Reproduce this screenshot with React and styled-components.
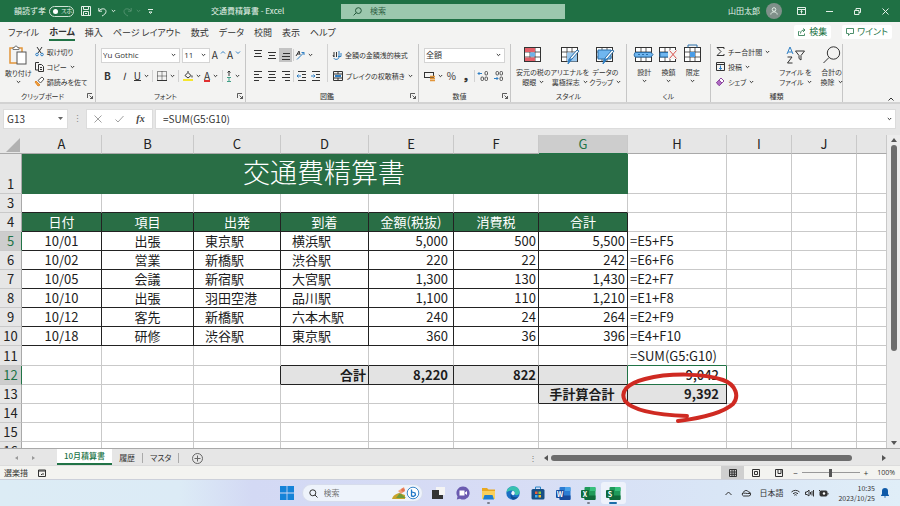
import React, { useState } from "react";
import styled, { createGlobalStyle, css } from "styled-components";

const colours = {
  title: "#1f7044",
  sheet: "#296e45",
  ribbon: "#f3f3f2",
  chrome: "#e6e6e6",
  grid: "#c9c9c9",
  ink: "#333",
  black: "#222",
  accent: "#217346",
  blue: "#2f7fc4",
};

const GlobalStyle = createGlobalStyle`
  * {
    box-sizing: border-box;
  }
  body {
    margin: 0;
    font-family: "Noto Sans CJK JP", sans-serif;
    font-size: 8px;
    line-height: 10px;
    color: ${colours.ink};
    overflow: hidden;
  }
  button, input, select {
    font: inherit;
    color: inherit;
    border: 0;
    padding: 0;
    margin: 0;
    background: none;
    border-radius: 0;
    outline: none;
  }
  button {
    font-feature-settings: "palt";
    white-space: nowrap;
  }
`;

const Page = styled.div`
  display: flex;
  flex-direction: column;
  height: 100vh;
`;

const Svg = styled.svg`
  display: block;
  flex: none;
  fill: none;
  stroke: currentColor;
  stroke-width: 1;
  overflow: visible;
`;

const Icon = ({ w = 12, h = w, children, ...rest }) => (
  <Svg width={w} height={h} viewBox={`0 0 ${w} ${h}`} aria-hidden="true" {...rest}>
    {children}
  </Svg>
);

const Chevron = () => (
  <Icon w={5} h={4}>
    <path d="M.8 1 2.5 2.7 4.2 1" />
  </Icon>
);

/* Title bar */

const TitleBar = styled.header`
  display: grid;
  grid-template-columns: 211fr 130fr 224fr 335fr;
  align-items: center;
  height: 22px;
  background: ${colours.title};
  color: #e4f0e8;
`;

const QuickAccess = styled.div`
  display: flex;
  align-items: center;
  gap: 7px;
  padding-left: 14px;
`;

const Toggle = styled.button`
  display: flex;
  align-items: center;
  gap: 3px;
  width: 25px;
  height: 11px;
  margin-left: -4px;
  padding: 0 3px;
  border: 1px solid #cfe3d6;
  border-radius: 6px;
  font-size: 6px;
  line-height: 8px;
  &::before {
    content: "";
    flex: none;
    width: 5px;
    height: 5px;
    border-radius: 50%;
    background: #fff;
  }
`;

const QuickButton = styled.button`
  display: flex;
  align-items: center;
  gap: 4px;
  opacity: ${(props) => (props.$faded ? 0.25 : 1)};
`;

const DocName = styled.div`
  white-space: nowrap;
`;

const TitleSearch = styled.label`
  display: flex;
  align-items: center;
  gap: 8px;
  height: 15px;
  padding-left: 12px;
  background: #9cc8ae;
  color: #23583a;
  input {
    flex: 1;
    min-width: 0;
    &::placeholder {
      color: #2f5f43;
    }
  }
`;

const WindowControls = styled.div`
  display: flex;
  align-items: center;
  justify-content: flex-end;
  padding-right: 1px;
`;

const Avatar = styled.span`
  display: flex;
  align-items: center;
  justify-content: center;
  width: 16px;
  height: 16px;
  margin: 0 5px 0 6px;
  border-radius: 50%;
  background: #80908a;
`;

const WindowButton = styled.button`
  display: flex;
  align-items: center;
  justify-content: center;
  width: 28px;
  height: 22px;
`;

/* Ribbon tabs */

const TabBar = styled.nav`
  display: flex;
  align-items: center;
  justify-content: space-between;
  height: 20px;
  padding: 0 8px;
  background: ${colours.ribbon};
`;

const Tabs = styled.div`
  display: flex;
  gap: 10px;
`;

const Tab = styled.button`
  height: 17px;
  padding-top: 1px;
  font-size: 9px;
  line-height: 14px;
  ${(props) =>
    props.$active &&
    css`
      font-weight: 700;
      border-bottom: 2px solid ${colours.accent};
    `}
`;

const TabActions = styled.div`
  display: flex;
  gap: 11px;
`;

const ActionButton = styled.button`
  display: flex;
  align-items: center;
  gap: 3px;
  height: 14px;
  padding: 0 4px;
  background: #fff;
  border-radius: 2px;
  color: ${colours.accent};
  font-size: 9px;
`;

/* Ribbon */

const Ribbon = styled.div`
  display: grid;
  grid-template-columns: 96fr 150fr 173fr 92fr 116fr 84fr 132fr 57fr;
  height: 62px;
  padding-top: 2px;
  background: ${colours.ribbon};
  border-bottom: 2px solid #d2d2d2;
`;

const GroupBox = styled.section`
  display: flex;
  flex-direction: column;
  min-width: 0;
  border-right: 1px solid #c6c6c6;
`;

const GroupBody = styled.div`
  display: flex;
  flex: 1;
  gap: ${(props) => props.$gap || 0}px;
  padding: 0 5px;
  justify-content: ${(props) => props.$justify || "flex-start"};
`;

const GroupFooter = styled.div`
  position: relative;
  height: 11px;
  padding-right: ${(props) => (props.$launcher ? 10 : 0)}px;
  text-align: center;
  font-size: 7px;
  line-height: 10px;
  font-feature-settings: "palt";
`;

const Launcher = styled.button`
  position: absolute;
  right: 2px;
  top: 2px;
`;

const Group = ({ label, launcher, children, ...rest }) => (
  <GroupBox aria-label={label}>
    <GroupBody {...rest}>{children}</GroupBody>
    <GroupFooter $launcher={launcher}>
      {label}
      {launcher && (
        <Launcher aria-label={`${label} の設定`}>
          <Icon w={6}>
            <path d="M.5 5V.5H5M2.5 2.5l3 3M5.5 3v2.5H3" strokeWidth=".8" />
          </Icon>
        </Launcher>
      )}
    </GroupFooter>
  </GroupBox>
);

const BigButton = styled.button`
  display: flex;
  flex-direction: column;
  align-items: center;
  padding-top: 3px;
  font-size: 7px;
  line-height: 10px;
  > svg:first-child {
    margin-bottom: 4px;
  }
  > svg:last-child {
    margin-top: 2px;
  }
`;

const Inline = styled.span`
  display: flex;
  align-items: center;
  gap: 3px;
`;

const Stack = styled.div`
  display: flex;
  flex: ${(props) => (props.$fill ? 1 : "none")};
  flex-direction: column;
`;

const Line = styled.div`
  display: flex;
  align-items: center;
  justify-content: ${(props) => (props.$spread ? "space-between" : "flex-start")};
  gap: ${(props) => props.$gap || 2}px;
  height: ${(props) => props.$height || 20}px;
`;

const SmallButton = styled.button`
  display: flex;
  align-items: center;
  gap: 3px;
  height: ${(props) => props.$height || 15}px;
  font-size: 7px;
`;

const ToolButton = styled.button`
  display: flex;
  align-items: center;
  justify-content: center;
  gap: 3px;
  min-width: 13px;
  height: 14px;
  font-size: 10px;
  background: ${(props) => (props.$on ? "#c4c4c4" : "none")};
`;

const Divider = styled.span`
  width: 1px;
  height: ${(props) => props.$height || 12}px;
  background: #d2d2d2;
`;

const SelectBox = styled.span`
  display: flex;
  align-items: center;
  flex: ${(props) => props.$grow || 1};
  min-width: 0;
  height: 15px;
  padding-right: 3px;
  background: #fff;
  border: 1px solid #d4d4d4;
  select {
    flex: 1;
    min-width: 0;
    padding-left: 1px;
    appearance: none;
    font-family: "Open Sans", "Noto Sans CJK JP", sans-serif;
    line-height: 12px;
  }
`;

const Select = ({ label, value, grow }) => (
  <SelectBox $grow={grow}>
    <select aria-label={label} defaultValue={value}>
      <option>{value}</option>
    </select>
    <Chevron />
  </SelectBox>
);

const Underlined = styled.span`
  line-height: 9px;
  border-bottom: ${(props) => props.$thick || 1}px solid ${(props) => props.$bar || "currentColor"};
`;

const RibbonEnd = styled.div`
  display: flex;
  align-items: flex-end;
  justify-content: flex-end;
  padding: 0 6px 1px;
`;

/* Formula bar */

const FormulaBar = styled.div`
  display: flex;
  align-items: center;
  height: 31px;
  padding: 0 4px 2px 3px;
  background: ${colours.chrome};
`;

const NameBox = styled.label`
  display: flex;
  align-items: center;
  width: 65px;
  height: 20px;
  padding: 0 4px 0 3px;
  background: #fff;
  border: 1px solid #dcdcdc;
  font-size: 10px;
  input {
    flex: 1;
    min-width: 0;
  }
`;

const Grip = styled.span`
  width: 18px;
  text-align: center;
  font-size: 9px;
  color: #888;
`;

const FormulaButtons = styled.div`
  display: flex;
  align-items: center;
  justify-content: space-around;
  width: 67px;
  height: 20px;
  margin-right: 2px;
  padding: 0 1px;
  background: #fff;
  border: 1px solid #dcdcdc;
  color: #a0a0a0;
`;

const FxButton = styled.button`
  font: italic 700 10px "Liberation Serif", serif;
  color: #444;
`;

const FormulaInput = styled.label`
  display: flex;
  flex: 1;
  align-items: center;
  height: 20px;
  padding: 0 3px 0 7px;
  background: #fff;
  border: 1px solid #dcdcdc;
  input {
    flex: 1;
    font-size: 10px;
  }
`;

/* Sheet */

const SheetArea = styled.main`
  display: flex;
  flex: 1;
  min-height: 0;
  background: #fff;
`;

const SheetClip = styled.div`
  flex: 1;
  min-width: 0;
  overflow: hidden;
`;

const Sheet = styled.table`
  width: 100%;
  table-layout: fixed;
  border-collapse: separate;
  border-spacing: 0;
  font-size: 13px;
  line-height: 18px;
  color: #1c1c1c;
`;

const Row = styled.tr`
  height: ${(props) => props.$height || 19}px;
`;

const Head = styled.th`
  padding: 0;
  font-size: 13px;
  font-weight: 400;
  vertical-align: bottom;
  background: ${(props) => (props.$on ? "#cdcdcd" : colours.chrome)};
  color: ${(props) => (props.$on ? colours.accent : "#222")};
  border-right: 1px solid ${colours.grid};
  border-bottom: 1px solid ${colours.grid};
  &[scope="col"] {
    border-bottom-color: ${(props) => (props.$on ? colours.accent : "#a9a9a9")};
  }
  &[scope="row"] {
    border-right-color: ${(props) => (props.$on ? colours.accent : "#a9a9a9")};
  }
`;

const Corner = styled.td`
  padding: 0 2px 1px 0;
  vertical-align: bottom;
  background: ${colours.chrome};
  border-bottom: 1px solid #a9a9a9;
  svg {
    margin-left: auto;
  }
`;

const Cell = styled.td`
  position: relative;
  padding: ${(props) => props.$pad};
  text-align: ${(props) => props.$align};
  white-space: nowrap;
  font-weight: ${(props) => props.$weight || 400};
  background: ${(props) => props.$fill || "#fff"};
  color: ${(props) => props.$colour || "inherit"};
  border-right: 1px solid ${(props) => props.$right};
  border-bottom: 1px solid ${(props) => props.$bottom};
`;

const TitleCell = styled.td`
  padding: 0 2px 4px 0;
  text-align: center;
  font-size: 27px;
  font-weight: 300;
  line-height: 36px;
  background: ${colours.sheet};
  color: #fff;
`;

const RedCircle = styled.svg`
  position: absolute;
  left: -8px;
  top: -13px;
  z-index: 1;
  fill: none;
  stroke: #cf2a22;
  stroke-linecap: round;
  stroke-linejoin: round;
`;

const widths = [22, 80, 92, 87, 88, 85, 85, 89, 99, 65, 65];
const letters = ["A", "B", "C", "D", "E", "F", "G", "H", "I", "J", ""];

const rows = [
  { n: 3, cells: [] },
  { n: 4, header: true, cells: ["日付", "項目", "出発", "到着", "金額(税抜)", "消費税", "合計"] },
  { n: 5, cells: ["10/01", "出張", "東京駅", "横浜駅", "5,000", "500", "5,500", "=E5+F5"] },
  { n: 6, cells: ["10/02", "営業", "新橋駅", "渋谷駅", "220", "22", "242", "=E6+F6"] },
  { n: 7, cells: ["10/05", "会議", "新宿駅", "大宮駅", "1,300", "130", "1,430", "=E2+F7"] },
  { n: 8, cells: ["10/10", "出張", "羽田空港", "品川駅", "1,100", "110", "1,210", "=E1+F8"] },
  { n: 9, cells: ["10/12", "客先", "新橋駅", "六本木駅", "240", "24", "264", "=E2+F9"] },
  { n: 10, cells: ["10/18", "研修", "渋谷駅", "東京駅", "360", "36", "396", "=E4+F10"] },
  { n: 11, height: 20, cells: ["", "", "", "", "", "", "", "=SUM(G5:G10)"] },
  { n: 12, cells: ["", "", "", "合計", "8,220", "822", "", "9,042"] },
  { n: 13, cells: ["", "", "", "", "", "", "手計算合計", "9,392"] },
  { n: 14, cells: [] },
  { n: 15, cells: [] },
  { n: 16, cells: [] },
];

const aligns = ["center", "center", "left", "left", "right", "right", "right", "left"];
const pads = ["0", "0", "0 0 0 11px", "0 0 0 11px", "0 5px 0 0", "0 2px 0 0", "0 2px 0 0", "0 0 0 2px"];

const isBoxed = (n, c) =>
  (n >= 4 && n <= 10 && c >= 0 && c <= 6) ||
  (n === 12 && c >= 3 && c <= 6) ||
  (n === 13 && (c === 6 || c === 7));

const isSelected = (n, c) => n === 12 && c === 7;

const edge = (n, c, n2, c2) => {
  if (isSelected(n, c) || isSelected(n2, c2)) return colours.accent;
  return isBoxed(n, c) || isBoxed(n2, c2) ? colours.black : colours.grid;
};

const cellStyle = (row, c) => {
  const { n, header } = row;
  const look = {
    $align: aligns[c],
    $pad: pads[c] || "0",
    $right: edge(n, c, n, c + 1),
    $bottom: edge(n, c, n + 1, c),
  };
  if (header && c < 7) {
    return { ...look, $align: "center", $pad: "0", $fill: colours.sheet, $colour: "#fff" };
  }
  if (n === 12 || n === 13) {
    const total = isBoxed(n, c);
    if (total) Object.assign(look, { $fill: "#e3e3e3", $weight: 700 });
    if (c === 3) Object.assign(look, { $align: "right", $pad: "0 2px 0 0" });
    if (c === 6) Object.assign(look, { $align: "center" });
    if (c === 7) Object.assign(look, { $align: "right", $pad: "0 7px 0 0", $weight: total ? 700 : 500 });
  }
  return look;
};

const VScroll = styled.div`
  display: flex;
  flex-direction: column;
  align-items: center;
  gap: 3px;
  width: 13px;
  padding: 3px 0;
  background: #ececec;
`;

const Thumb = styled.div`
  flex: ${(props) => props.$part};
  border-radius: 3px;
  background: #6d6d6d;
  ${(props) => (props.$across ? "height: 6px;" : "width: 6px;")}
`;

const Rest = styled.div`
  flex: ${(props) => props.$part};
`;

/* Sheet tabs and status bar */

const SheetBar = styled.div`
  display: grid;
  grid-template-columns: 537fr 363fr;
  height: 17px;
  background: ${colours.chrome};
  border-top: 1px solid #a9a9a9;
`;

const SheetTabs = styled.div`
  display: flex;
  align-items: center;
  padding-left: 15px;
`;

const SheetArrow = styled.button`
  width: 16px;
  text-align: left;
  color: #999;
`;

const SheetTab = styled.button`
  height: 10px;
  padding: 0 7px;
  border-right: 1px solid #aaa;
  ${(props) =>
    props.$active &&
    css`
      height: 16px;
      margin-left: 10px;
      margin-bottom: 2px;
      border-right: 0;
      border-bottom: 2px solid ${colours.accent};
      background: #fff;
      color: ${colours.accent};
      font-weight: 500;
    `}
`;

const AddSheet = styled.button`
  margin-left: 13px;
  color: #666;
`;

const TabsGrip = styled.span`
  margin-left: auto;
  color: #777;
`;

const HScroll = styled.div`
  display: flex;
  align-items: center;
  gap: 3px;
  padding: 0 14px 0 7px;
`;

const StatusBar = styled.footer`
  display: flex;
  align-items: center;
  height: 14px;
  padding: 0 5px 0 4px;
  background: #f3f3f0;
  border-top: 1px solid #dcdcdc;
`;

const StatusIcon = styled.button`
  margin-left: 10px;
`;

const ViewButtons = styled.div`
  display: flex;
  margin-left: auto;
`;

const ViewButton = styled.button`
  display: flex;
  align-items: center;
  justify-content: center;
  width: 23px;
  height: 13px;
  background: ${(props) => (props.$on ? "#cfcfcf" : "none")};
`;

const ZoomControl = styled.div`
  display: flex;
  align-items: center;
  gap: 4px;
  margin-left: 3px;
  input {
    width: 58px;
    height: 10px;
    appearance: none;
    background: linear-gradient(#999, #999) center / 100% 1px no-repeat;
    &::-webkit-slider-thumb {
      appearance: none;
      width: 3px;
      height: 8px;
      background: #555;
    }
  }
  span {
    margin-left: 5px;
    font-family: "Open Sans", sans-serif;
    font-size: 7px;
  }
`;

/* Taskbar */

const Taskbar = styled.footer`
  display: grid;
  grid-template-columns: 1fr auto 1fr;
  align-items: center;
  height: 27px;
  border-top: 1px solid #ccd0da;
  background: linear-gradient(90deg, #dcecf5 0%, #dcebf6 20%, #d3d9f4 28%, #d7dcf5 55%, #d9e6f6 80%, #e0eef8 100%);
`;

const Apps = styled.div`
  display: flex;
  grid-column: 2;
  align-items: center;
`;

const AppButton = styled.button`
  position: relative;
  display: flex;
  align-items: center;
  justify-content: center;
  width: 25px;
  height: 22px;
  border-radius: 3px;
  background: ${(props) => (props.$active ? "#eef2fb" : "none")};
  &::after {
    content: "";
    position: absolute;
    bottom: 0;
    width: ${(props) => (props.$active ? 8 : 3)}px;
    height: 2px;
    border-radius: 1px;
    background: ${(props) => (props.$active ? "#1c6ea8" : props.$open ? "#7b7f8c" : "transparent")};
  }
`;

const TaskSearch = styled.label`
  display: flex;
  align-items: center;
  gap: 6px;
  width: 121px;
  height: 18px;
  margin: 0 3px 0 2px;
  padding: 0 2px 0 6px;
  border: 1px solid #d6dcec;
  border-radius: 9px;
  background: #eef3fb;
  color: #333;
  input {
    flex: 1;
    min-width: 0;
  }
`;

const Tray = styled.div`
  display: flex;
  align-items: center;
  justify-content: flex-end;
  gap: 5px;
  padding-right: 11px;
`;

const TrayButton = styled.button`
  display: flex;
  align-items: center;
  margin-right: ${(props) => props.$after || 0}px;
`;

const Clock = styled.button`
  margin: 0 1px 0 5px;
  text-align: right;
  font-size: 7px;
  line-height: 10px;
`;

const AlignIcon = ({ lines }) => (
  <Icon w={10}>
    {lines.map(([x1, x2, y]) => (
      <path key={y} d={`M${x1} ${y}H${x2}`} />
    ))}
  </Icon>
);

const alignIcons = {
  top: [[1, 9, 0.5], [2, 8, 3.5], [1, 9, 6.5]],
  middle: [[1, 9, 2.5], [2, 8, 5.5], [1, 9, 8.5]],
  bottom: [[2, 9, 3.5], [1, 9, 6.5], [1, 9, 9.5]],
  left: [[1, 9, 0.5], [1, 6, 3.5], [1, 9, 6.5], [1, 6, 9.5]],
  centre: [[1, 9, 0.5], [2, 8, 3.5], [1, 9, 6.5], [2, 8, 9.5]],
  right: [[1, 9, 0.5], [4, 9, 3.5], [1, 9, 6.5], [4, 9, 9.5]],
};

const TableIcon = ({ children }) => (
  <Icon w={18} h={16}>
    <rect x=".5" y=".5" width="16" height="14" fill="#fff" />
    <path d="M.5 5h16M.5 10h16M6 .5v14M11 .5v14" strokeWidth=".8" />
    {children}
  </Icon>
);

const IndentIcon = ({ flip }) => (
  <Icon w={10}>
    <path d="M1 .5h8M5 3.5h4M5 6.5h4M1 9.5h8" />
    <path d={flip ? "M0 5h4M2.5 3.5 4 5 2.5 6.5" : "M0 5h4M1.5 3.5 0 5l1.5 1.5"} stroke={colours.blue} />
  </Icon>
);

const SearchGlyph = ({ size = 9 }) => (
  <Svg width={size} height={size} viewBox="0 0 9 9" aria-hidden="true">
    <circle cx="5.4" cy="3.6" r="2.9" />
    <path d="M3.2 5.8.6 8.4" />
  </Svg>
);

const OfficeIcon = ({ letter, dark, mid, light }) => (
  <Icon w={15}>
    <g stroke="none">
      <rect x="3.5" y="1" width="11" height="13" rx="1" fill={mid} />
      <path d="M9 1h4.5a1 1 0 0 1 1 1v3H9z" fill={light} />
      <path d="M3.5 9.5h11V13a1 1 0 0 1-1 1h-9a1 1 0 0 1-1-1z" fill={dark} />
      <rect x="0" y="4" width="8" height="8" rx="1" fill={dark} />
      <text x="4" y="10.5" textAnchor="middle" fontSize="7" fontWeight="700" fill="#fff">
        {letter}
      </text>
    </g>
  </Icon>
);

const excel = { dark: "#0f6a3b", mid: "#1f9a5a", light: "#36c07c" };

const SheetTable = () => (
  <Sheet>
    <colgroup>
      {widths.map((w, i) => (
        <col key={i} style={{ width: w }} />
      ))}
      <col />
    </colgroup>
    <thead>
      <Row>
        <Corner>
          <Icon w={14}>
            <path d="M14 0v14H0z" fill="#b1b1b1" stroke="none" />
          </Icon>
        </Corner>
        {letters.map((letter, i) => (
          <Head key={i} scope="col" $on={letter === "G"}>
            {letter}
          </Head>
        ))}
      </Row>
    </thead>
    <tbody>
      <Row $height={40}>
        <Head scope="row">1</Head>
        <TitleCell colSpan={7}>交通費精算書</TitleCell>
        {letters.slice(7).map((letter) => (
          <Cell key={letter} $right={colours.grid} $bottom={colours.grid} />
        ))}
      </Row>
      {rows.map((row) => (
        <Row key={row.n} $height={row.height}>
          <Head scope="row" $on={row.n === 5 || row.n === 12}>
            {row.n}
          </Head>
          {letters.map((letter, c) => (
            <Cell key={c} {...cellStyle(row, c)}>
              {row.cells[c]}
              {row.n === 13 && c === 7 && (
                <RedCircle width="120" height="52" viewBox="0 0 120 52" aria-hidden="true">
                  <path
                    strokeWidth="4"
                    d="M67 44C40 43 14 40 5 29 0 20 6 12 25 7 48 1 84 1 103 8c14 5 16 17 10 24C104 40 82 46 58 49"
                  />
                </RedCircle>
              )}
            </Cell>
          ))}
        </Row>
      ))}
    </tbody>
  </Sheet>
);

const tabNames = ["ファイル", "ホーム", "挿入", "ページ レイアウト", "数式", "データ", "校閲", "表示", "ヘルプ"];
const sheetNames = ["10月積算書", "履歴", "マスタ"];

const RibbonGroups = () => (
  <Ribbon>
    <Group label="クリップボード" launcher $gap={3}>
      <BigButton>
        <Icon w={18} h={17}>
          <rect x="1" y="1" width="12" height="15" stroke="#e2953a" strokeWidth="1.5" />
          <path d="M4 2.500V.5h1.500a1.500 1.500 0 0 1 3 0H10v2z" fill="#fff" stroke="#777" />
          <rect x="8" y="5" width="9" height="12" fill="#fff" stroke="#555" />
        </Icon>
        敢り付け
        <Chevron />
      </BigButton>
      <Stack>
        <SmallButton>
          <Icon w={9}>
            <path d="M2 0l4 6M7 0 3 6" />
            <circle cx="2" cy="7.5" r="1.3" stroke={colours.blue} />
            <circle cx="7" cy="7.5" r="1.3" stroke={colours.blue} />
          </Icon>
          取け切り
        </SmallButton>
        <SmallButton>
          <Icon w={9} h={10}>
            <path d="M3 8H.5V.5H4M3.5 2.5h3l2 2V9.5h-5zM5 5.5h2M5 7.5h2" />
          </Icon>
          コピー
          <Chevron />
        </SmallButton>
        <SmallButton>
          <Icon w={9}>
            <path d="M1 4l4 4-2 1-3-4z" fill="#f0a040" stroke="#e28a2a" />
            <path d="M3 3.5 5.5 6 9 2 7 0z" fill="#fff" stroke="#555" />
          </Icon>
          韻読みを佐て
        </SmallButton>
      </Stack>
    </Group>

    <Group label="フォント" launcher>
      <Stack $fill>
        <Line $gap={2} $height={22}>
          <Select label="フォント名" value="Yu Gothic" grow={85} />
          <Select label="フォント サイズ" value="11" grow={26} />
          <ToolButton aria-label="フォント サイズの拡大">
            <span>A</span>
            <Icon w={4} h={8}>
              <path d="M0 2.5 2 .5l2 2" stroke={colours.blue} />
            </Icon>
          </ToolButton>
          <ToolButton aria-label="フォント サイズの縮小">
            <span>A</span>
            <Icon w={4} h={8}>
              <path d="M0 .5l2 2 2-2" stroke={colours.blue} />
            </Icon>
          </ToolButton>
        </Line>
        <Line $gap={1} $spread>
          <ToolButton aria-label="太字">
            <b>B</b>
          </ToolButton>
          <ToolButton aria-label="斜体">
            <i>I</i>
          </ToolButton>
          <ToolButton aria-label="下線">
            <Underlined>U</Underlined>
            <Chevron />
          </ToolButton>
          <Divider />
          <ToolButton aria-label="罫線">
            <Icon w={10}>
              <path d="M.5.5h9v9h-9zM5 .5v9M.5 5h9" strokeDasharray="1 1" />
              <path d="M0 9.5h10" />
            </Icon>
            <Chevron />
          </ToolButton>
          <Divider />
          <ToolButton aria-label="塗りつぶしの色">
            <Icon w={10}>
              <path d="M2 4.5 5 1.5l3 3-3 2.5zM5 1.5V0M9 4.5v2" />
              <path d="M0 9h10" stroke="#f5e62e" strokeWidth="2" />
            </Icon>
            <Chevron />
          </ToolButton>
          <ToolButton aria-label="フォントの色">
            <Underlined $thick={2} $bar="#e03030">A</Underlined>
            <Chevron />
          </ToolButton>
          <Divider />
          <ToolButton aria-label="ふりがな">
            <Icon w={6} h={11}>
              <path d="M3 5V0M1.5 1.5 3 0l1.5 1.5" />
              <path d="M1 6.5h4M3 6.5v4M1 10.5h4" stroke="#3f9f86" />
            </Icon>
            <Chevron />
          </ToolButton>
        </Line>
      </Stack>
    </Group>

    <Group label="図鑑" launcher $gap={5}>
      <Stack>
        <Line $gap={1} $height={22}>
          <ToolButton aria-label="上揃え"><AlignIcon lines={alignIcons.top} /></ToolButton>
          <ToolButton aria-label="上下中央揃え"><AlignIcon lines={alignIcons.middle} /></ToolButton>
          <ToolButton aria-label="下揃え" $on><AlignIcon lines={alignIcons.bottom} /></ToolButton>
          <Divider />
          <ToolButton aria-label="方向">
            <Icon w={10}>
              <path d="M1 6 4 1l1 4M2 4h2" />
              <path d="M2 9.5 9 2.5M9 5V2.5H6.5" stroke={colours.blue} />
            </Icon>
            <Chevron />
          </ToolButton>
        </Line>
        <Line $gap={1}>
          <ToolButton aria-label="左揃え"><AlignIcon lines={alignIcons.left} /></ToolButton>
          <ToolButton aria-label="中央揃え"><AlignIcon lines={alignIcons.centre} /></ToolButton>
          <ToolButton aria-label="右揃え"><AlignIcon lines={alignIcons.right} /></ToolButton>
          <Divider />
          <ToolButton aria-label="インデントを減らす"><IndentIcon /></ToolButton>
          <ToolButton aria-label="インデントを増やす"><IndentIcon flip /></ToolButton>
        </Line>
      </Stack>
      <Divider $height={38} />
      <Stack>
        <SmallButton $height={22}>
          <Icon w={9}>
            <path d="M1 1v5M3.5 1v5M0 4l1 2" />
            <path d="M6 0v6c0 3-5 3-5 1M5 5.5h3V2" stroke={colours.blue} />
          </Icon>
          全額の金額浅的検式
        </SmallButton>
        <SmallButton $height={20}>
          <Icon w={10}>
            <path d="M.5.5h9v9h-9zM.5 3h9M.5 7h9M5 .5V3M5 7v2.5" />
            <path d="M2 5h6" stroke={colours.blue} strokeWidth="2" />
          </Icon>
          プレイクの权敢積き
          <Chevron />
        </SmallButton>
      </Stack>
    </Group>

    <Group label="数値" launcher>
      <Stack $fill>
        <Line $height={22}>
          <Select label="表示形式" value="全額" />
        </Line>
        <Line $gap={1} $spread>
          <ToolButton aria-label="通貨表示形式">
            <Icon w={11} h={10}>
              <rect x=".5" y="1.5" width="9" height="5" />
              <path d="M6 5.5h5M6 7.5h5M6 9.5h5" stroke="#e2953a" strokeWidth="1.5" />
            </Icon>
            <Chevron />
          </ToolButton>
          <ToolButton aria-label="パーセント">%</ToolButton>
          <ToolButton aria-label="桁区切り">
            <b>❟</b>
          </ToolButton>
          <Divider />
          <ToolButton aria-label="小数点以下の表示桁数を増やす">
            <Icon w={11} h={10}>
              <path d="M0 2.5h4M1.5 1 0 2.5 1.5 4" stroke={colours.blue} />
              <rect x="7" y=".5" width="2.5" height="3.5" rx="1" strokeWidth=".8" />
              <rect x="3" y="6" width="2.5" height="3.5" rx="1" strokeWidth=".8" />
              <rect x="7" y="6" width="2.5" height="3.5" rx="1" strokeWidth=".8" />
            </Icon>
          </ToolButton>
          <ToolButton aria-label="小数点以下の表示桁数を減らす">
            <Icon w={11} h={10}>
              <path d="M1 7.5h4M3.5 6 5 7.5 3.5 9" stroke={colours.blue} />
              <rect x="3" y=".5" width="2.5" height="3.5" rx="1" strokeWidth=".8" />
              <rect x="7" y=".5" width="2.5" height="3.5" rx="1" strokeWidth=".8" />
              <rect x="7" y="6" width="2.5" height="3.5" rx="1" strokeWidth=".8" />
            </Icon>
          </ToolButton>
        </Line>
      </Stack>
    </Group>

    <Group label="スタイル" $justify="space-between">
      <BigButton>
        <TableIcon>
          <path d="M1 1h10v4H1zM1 10.5h10V14H1z" fill="#e4606a" stroke="none" />
          <path d="M6 5.5h5v4H6z" fill="#6fb1e8" stroke="none" />
        </TableIcon>
        <span>安元の税の</span>
        <Inline>
          眼眼 <Chevron />
        </Inline>
      </BigButton>
      <BigButton>
        <TableIcon>
          <path d="M6 5.5h10v9H6z" fill="#9cc9ef" stroke="none" />
          <path d="M18 4 11 12l-3 3 1-4 7-8z" fill="#fff" stroke="#2b6ea8" />
          <path d="M11 12l-4 5 1-5z" fill={colours.blue} stroke={colours.blue} />
        </TableIcon>
        <span>アリエナルを</span>
        <Inline>
          裏極採志 <Chevron />
        </Inline>
      </BigButton>
      <BigButton>
        <TableIcon>
          <path d="M2 3h13v9H2z" fill="#6fb6f0" stroke="#2b6ea8" />
          <path d="M18 4 11 12l-3 3 1-4 7-8z" fill="#fff" stroke="#2b6ea8" />
          <path d="M11 12l-4 5 1-5z" fill={colours.blue} stroke={colours.blue} />
        </TableIcon>
        <span>データの</span>
        <Inline>
          クラップ <Chevron />
        </Inline>
      </BigButton>
    </Group>

    <Group label="くル" $justify="space-around">
      <BigButton>
        <TableIcon>
          <path d="M0 5.5h16l2 2-2 2.5H0l-1-2z" fill="#6fb6f0" stroke="#2b6ea8" />
          <path d="M3 7.5h2M7 7.5h2M11 7.5h2" stroke="#2b6ea8" />
        </TableIcon>
        設計
        <Chevron />
      </BigButton>
      <BigButton>
        <TableIcon>
          <path d="M1 5.5h8l2 2-2 2.5H1z" fill="#6fb6f0" stroke="#2b6ea8" />
          <path d="M9 3h9v9H9z" fill={colours.ribbon} stroke="none" />
          <path d="M10.5 3.5l7 8M17.5 3.5l-7 8" stroke="#d9534f" />
        </TableIcon>
        換鎮
        <Chevron />
      </BigButton>
      <BigButton>
        <TableIcon>
          <path d="M6 5h5v5H6z" fill="#4a9de8" stroke="none" />
          <path d="M4 .5V-2h9V.5" stroke="#2b6ea8" />
        </TableIcon>
        限定
        <Chevron />
      </BigButton>
    </Group>

    <Group label="種類" $gap={9}>
      <Stack>
        <SmallButton>
          <Icon w={9}>
            <path d="M8 2V.5H1L5 4.5 1 8.5h7V7" />
          </Icon>
          チー合計間
          <Chevron />
        </SmallButton>
        <SmallButton>
          <Icon w={9}>
            <path d="M.5.5h8v8h-8zM.5 2.5h8" />
            <path d="M4.5 3.5v4M3 6l1.5 1.5L6 6" stroke={colours.blue} />
          </Icon>
          投稿
          <Chevron />
        </SmallButton>
        <SmallButton>
          <Icon w={9}>
            <path d="M.5 5.5 5 1l3 3-4.5 4.5H3z" fill="#fff" stroke="#8e4aa0" />
            <path d="M.5 5.5 3 3l3 3-2.5 2.5H3z" fill="#b06cc4" stroke="#8e4aa0" />
          </Icon>
          シェブ
          <Chevron />
        </SmallButton>
      </Stack>
      <BigButton>
        <Icon w={18} h={16}>
          <path d="M1 7 4 0l3 7M2 5h4" stroke={colours.blue} />
          <path d="M1.5 10H6l-4.5 6H6.5" />
          <path d="M9.5 4h9l-3.5 4.5V13l-2-1.5v-3z" />
        </Icon>
        <span>ファイル を</span>
        <Inline>
          ファイル <Chevron />
        </Inline>
      </BigButton>
      <BigButton>
        <Icon w={18} h={16}>
          <circle cx="10.5" cy="6" r="6.2" />
          <path d="M6 10.5.5 16" />
        </Icon>
        <span>合計の</span>
        <Inline>
          換除 <Chevron />
        </Inline>
      </BigButton>
    </Group>

    <RibbonEnd>
      <button aria-label="リボンを折りたたむ">
        <Icon w={6} h={4}>
          <path d="M.5 3.5 3 1l2.5 2.5" />
        </Icon>
      </button>
    </RibbonEnd>
  </Ribbon>
);

const TaskbarApps = () => (
  <Apps>
    <AppButton aria-label="スタート">
      <Icon w={14}>
        <g fill="#1583d8" stroke="none">
          <path d="M0 0h6.6v6.6H0zM7.4 0H14v6.6H7.4zM0 7.4h6.6V14H0zM7.4 7.4H14V14H7.4z" />
        </g>
      </Icon>
    </AppButton>
    <TaskSearch>
      <Icon w={9}>
        <circle cx="3.8" cy="3.8" r="3" />
        <path d="M6 6l2.5 2.5" />
      </Icon>
      <input aria-label="Windows 検索" placeholder="検索" />
      <Icon w={28} h={14}>
        <g stroke="none">
          <path d="M0 13c1-4 4-5 7-6l6 2v4z" fill="#c8a32c" />
          <path d="M4 12l4-5 6 5z" fill="#6f9b3b" />
          <path d="M6 5l6-4 1 4-4 3z" fill="#f0a07c" />
          <circle cx="11" cy="4" r="1.8" fill="#e5734f" />
        </g>
        <circle cx="21" cy="7" r="5.8" fill="#fff" stroke="#3a86c8" />
        <path d="M19.5 3.5v6.5l2 .5 2-1.5-.5-2-3-1" stroke="#1f78c8" strokeWidth="1.3" />
      </Icon>
    </TaskSearch>
    <AppButton aria-label="タスク ビュー">
      <Icon w={13} h={12}>
        <path d="M4 0h9v8H4z" fill="#f4f4f4" stroke="none" />
        <path d="M0 3h7v5h4v4H0z" fill="#333" stroke="none" />
      </Icon>
    </AppButton>
    <AppButton aria-label="チャット">
      <Icon w={14}>
        <path d="M7 .5a6.5 6.5 0 1 1-3 12.2L.8 13.500l.7-3A6.5 6.5 0 0 1 7 .5z" fill="#6b5bb0" stroke="none" />
        <path d="M3.5 4.5h5v5h-5zM9 6.5l2-1.5v4L9 7.5z" fill="#fff" stroke="none" />
      </Icon>
    </AppButton>
    <AppButton aria-label="エクスプローラー" $open>
      <Icon w={15} h={13}>
        <g stroke="none">
          <path d="M1 1h5l1.5 1.5H14V12H1z" fill="#e9a820" />
          <path d="M1 4h13v8H1z" fill="#fbd05a" />
          <path d="M3.5 8h8l1.5 4.5H2z" fill="#1f7fd0" />
        </g>
      </Icon>
    </AppButton>
    <AppButton aria-label="Edge">
      <Icon w={14}>
        <g stroke="none">
          <circle cx="7" cy="7" r="6.7" fill="#1b6fc4" />
          <path d="M.4 6.5C1 2.5 4 .3 7.2.3c4 0 6.500 3 6.500 5.700 0 2-1.700 3.200-3.400 3.200-1.300 0-2-.6-1.500-1.300C9.500 6 8 4.500 6 4.500c-2.600 0-4.600 1-5.600 2z" fill="#38c1b0" />
          <path d="M5.3 7.5c0 3 2.5 4.5 6.5 3.5C10.5 13 8.7 13.7 7 13.7 4.500 12.500 4 9 5.300 7.500z" fill="#0f4c94" />
          <path d="M8.6 8c.7-1.5-.3-3-1.800-3.300C5.500 5.500 5.200 7 5.300 8c1 1.500 3 1.500 3.300 0z" fill="#eaf5fb" />
        </g>
      </Icon>
    </AppButton>
    <AppButton aria-label="Microsoft Store">
      <Icon w={14}>
        <path d="M4.5 3V1h5v2" stroke="#2a86c8" />
        <rect x=".5" y="3" width="13" height="10.5" rx="1.5" fill="#174f86" stroke="none" />
        <path d="M4 5.5h2.5V8H4z" fill="#f25f3a" stroke="none" />
        <path d="M7.5 5.5H10V8H7.5z" fill="#8cc63f" stroke="none" />
        <path d="M4 9h2.5v2.5H4z" fill="#3bb0f0" stroke="none" />
        <path d="M7.5 9H10v2.5H7.5z" fill="#fbc02d" stroke="none" />
      </Icon>
    </AppButton>
    <AppButton aria-label="Word">
      <OfficeIcon letter="W" dark="#174a9c" mid="#2b7cd3" light="#4aa3ea" />
    </AppButton>
    <AppButton aria-label="Excel" $open>
      <OfficeIcon letter="X" {...excel} />
    </AppButton>
    <AppButton aria-label="交通費精算書 - Excel" $active>
      <OfficeIcon letter="S" {...excel} />
    </AppButton>
  </Apps>
);

const TaskbarTray = () => (
  <Tray>
    <TrayButton aria-label="隠れているインジケーター" $after={4}>
      <Icon w={7} h={5}>
        <path d="M.5 4 3.5 1l3 3" />
      </Icon>
    </TrayButton>
    <TrayButton aria-label="OneDrive" $after={3}>
      <Icon w={10} h={8}>
        <path d="M2.5 7a2 2 0 0 1 0-3.7A2.7 2.7 0 0 1 7.5 3a2 2 0 0 1 .3 4zM1 5c2-2 4 0 8-.5" />
      </Icon>
    </TrayButton>
    <TrayButton $after={3}>日本語</TrayButton>
    <TrayButton aria-label="ネットワーク">
      <Icon w={9} h={8}>
        <path d="M.5 3a5.7 5.7 0 0 1 8 0M2 4.7a3.7 3.7 0 0 1 5 0M3.3 6.2a1.8 1.8 0 0 1 2.4 0" />
      </Icon>
    </TrayButton>
    <TrayButton aria-label="音量">
      <Icon w={9} h={8}>
        <path d="M.5 3h1.5L4 1v6L2 5.500H.5zM5.500 3v2.500M7 2v4.500M8.500 1v6.500" />
      </Icon>
    </TrayButton>
    <TrayButton aria-label="バッテリー">
      <Icon w={9} h={8}>
        <rect x="1" y="2" width="7" height="5" rx="1" fill="currentColor" />
        <path d="M0 1l2 2M9 4v1.5" />
        <circle cx="5" cy="4.5" r="1.2" fill="#fff" stroke="none" />
      </Icon>
    </TrayButton>
    <Clock>
      10:35
      <br />
      2023/10/25
    </Clock>
    <TrayButton aria-label="通知">
      <Icon w={8} h={10}>
        <path d="M4 0a3 3 0 0 1 3 3v3l1 1.5v.5H0v-.5L1 6V3a3 3 0 0 1 3-3zM3 8.5h2L4 10z" fill="#0f5aa8" stroke="none" />
      </Icon>
    </TrayButton>
  </Tray>
);

const App = () => {
  const [tab, setTab] = useState("ホーム");
  const [sheet, setSheet] = useState("10月積算書");

  return (
    <Page>
      <GlobalStyle />
      <TitleBar>
        <QuickAccess>
          <span>韻読ず孝</span>
          <Toggle aria-label="韻読ず孝">スホ</Toggle>
          <QuickButton aria-label="上書き保存">
            <Icon w={10}>
              <path d="M.5.5h9v9h-9zM2.5.5v3h5v-3M2.5 9.5v-4h5v4M4 7.5h2" />
            </Icon>
          </QuickButton>
          <QuickButton aria-label="元に戻す">
            <Icon w={9}>
              <path d="M.8 1v3.2H4M1 4c2-3 7-3 7 .5C8 6.5 6 8 4 9" />
            </Icon>
            <Chevron />
          </QuickButton>
          <QuickButton aria-label="やり直し" $faded>
            <Icon w={9}>
              <path d="M8.2 1v3.2H5M8 4C6 1 1 1 1 4.5 1 6.5 3 8 5 9" />
            </Icon>
            <Chevron />
          </QuickButton>
          <QuickButton aria-label="クイック アクセスのカスタマイズ">
            <Icon w={5} h={5}>
              <path d="M0 .5h5M1 3l1.5 1.5L4 3z" />
            </Icon>
          </QuickButton>
        </QuickAccess>
        <DocName>交通費精算書 - Excel</DocName>
        <TitleSearch>
          <SearchGlyph />
          <input aria-label="検索" placeholder="検索" />
        </TitleSearch>
        <WindowControls>
          <span>山田太郎</span>
          <Avatar>
            <Icon w={8}>
              <circle cx="4" cy="2.5" r="1.8" />
              <path d="M.8 7.5C1 4 7 4 7.2 7.5" />
            </Icon>
          </Avatar>
          <WindowButton aria-label="リボンの表示オプション">
            <Icon w={9} h={8}>
              <path d="M.5.5h8v7h-8zM.5 2.5h8M4.5 6.5v-3M3.5 4.5l1-1 1 1" />
            </Icon>
          </WindowButton>
          <WindowButton aria-label="最小化">
            <Icon w={7}>
              <path d="M0 3.5h7" />
            </Icon>
          </WindowButton>
          <WindowButton aria-label="元のサイズに戻す">
            <Icon w={7}>
              <path d="M.5 2.5h4.5v4H.5zM2 2.500v-2h4.500v4H5" />
            </Icon>
          </WindowButton>
          <WindowButton aria-label="閉じる">
            <Icon w={7}>
              <path d="M.5.5l6 6M6.5.5l-6 6" />
            </Icon>
          </WindowButton>
        </WindowControls>
      </TitleBar>

      <TabBar>
        <Tabs>
          {tabNames.map((name) => (
            <Tab key={name} $active={tab === name} onClick={() => setTab(name)}>
              {name}
            </Tab>
          ))}
        </Tabs>
        <TabActions>
          <ActionButton>
            <Icon w={8}>
              <path d="M1.5 3.5H.5v4h6v-2M2.5 5.5C2.5 3 4 2 7 2M5 .5 7 2 5 4" strokeWidth=".8" />
            </Icon>
            検集
          </ActionButton>
          <ActionButton>
            <Icon w={8}>
              <path d="M.5.5h7v5H4L2.5 7.500v-2h-2z" strokeWidth=".8" />
            </Icon>
            ワイント
          </ActionButton>
        </TabActions>
      </TabBar>

      <RibbonGroups />

      <FormulaBar>
        <NameBox>
          <input aria-label="名前ボックス" defaultValue="G13" />
          <Icon w={5} h={3}>
            <path d="M0 0h5L2.5 3z" fill="#666" stroke="none" />
          </Icon>
        </NameBox>
        <Grip>⋮</Grip>
        <FormulaButtons>
          <button aria-label="キャンセル">
            <Icon w={8}>
              <path d="M.5.5l7 7M7.5.5l-7 7" />
            </Icon>
          </button>
          <button aria-label="入力">
            <Icon w={9} h={8}>
              <path d="M.5 4.5 3 7l5.5-6" />
            </Icon>
          </button>
          <FxButton aria-label="関数の挿入">fx</FxButton>
        </FormulaButtons>
        <FormulaInput>
          <input aria-label="数式バー" defaultValue="=SUM(G5:G10)" />
          <Chevron />
        </FormulaInput>
      </FormulaBar>

      <SheetArea>
        <SheetClip>
          <SheetTable />
        </SheetClip>
        <VScroll>
          <Icon w={6} h={4}>
            <path d="M0 4h6L3 0z" fill="#555" stroke="none" />
          </Icon>
          <Thumb $part={206} />
          <Rest $part={84} />
          <Icon w={6} h={4}>
            <path d="M0 0h6L3 4z" fill="#555" stroke="none" />
          </Icon>
        </VScroll>
      </SheetArea>

      <SheetBar>
        <SheetTabs>
          <SheetArrow aria-label="前のシート">
            <Icon w={4}>
              <path d="M3 0v4L0 2z" fill="currentColor" stroke="none" />
            </Icon>
          </SheetArrow>
          <SheetArrow aria-label="次のシート">
            <Icon w={4}>
              <path d="M1 0v4l3-2z" fill="currentColor" stroke="none" />
            </Icon>
          </SheetArrow>
          {sheetNames.map((name) => (
            <SheetTab key={name} $active={sheet === name} onClick={() => setSheet(name)}>
              {name}
            </SheetTab>
          ))}
          <AddSheet aria-label="新しいシート">
            <Icon w={11}>
              <circle cx="5.5" cy="5.5" r="5" />
              <path d="M5.5 2.5v6M2.5 5.5h6" />
            </Icon>
          </AddSheet>
          <TabsGrip>⋮</TabsGrip>
        </SheetTabs>
        <HScroll>
          <Icon w={4} h={6}>
            <path d="M4 0v6L0 3z" fill="#555" stroke="none" />
          </Icon>
          <Thumb $across $part={300} />
          <Rest $part={24} />
          <Icon w={4} h={6}>
            <path d="M0 0v6l4-3z" fill="#555" stroke="none" />
          </Icon>
        </HScroll>
      </SheetBar>

      <StatusBar>
        <span>選楽措</span>
        <StatusIcon aria-label="マクロの記録">
          <Icon w={8}>
            <path d="M.5 1h7v6.5h-7zM0 2h8M3 5.5h1M5 4v2" />
          </Icon>
        </StatusIcon>
        <ViewButtons>
          <ViewButton aria-label="標準" $on>
            <Icon w={8}>
              <path d="M.5.5h7v7h-7zM3 .5v7M5.3.5v7M.5 3h7M.5 5.3h7" />
            </Icon>
          </ViewButton>
          <ViewButton aria-label="ページ レイアウト表示">
            <Icon w={8}>
              <path d="M.5.5h7v7h-7zM2.5 2.5h3v3h-3z" />
            </Icon>
          </ViewButton>
          <ViewButton aria-label="改ページ プレビュー">
            <Icon w={8}>
              <path d="M.5.5h7v7h-7zM3 .5v4h3v-4" />
            </Icon>
          </ViewButton>
        </ViewButtons>
        <ZoomControl>
          <button aria-label="縮小">−</button>
          <input type="range" aria-label="ズーム" min="0" max="200" defaultValue="100" />
          <button aria-label="拡大">+</button>
          <span>100%</span>
        </ZoomControl>
      </StatusBar>

      <Taskbar>
        <TaskbarApps />
        <TaskbarTray />
      </Taskbar>
    </Page>
  );
};

export default App;
